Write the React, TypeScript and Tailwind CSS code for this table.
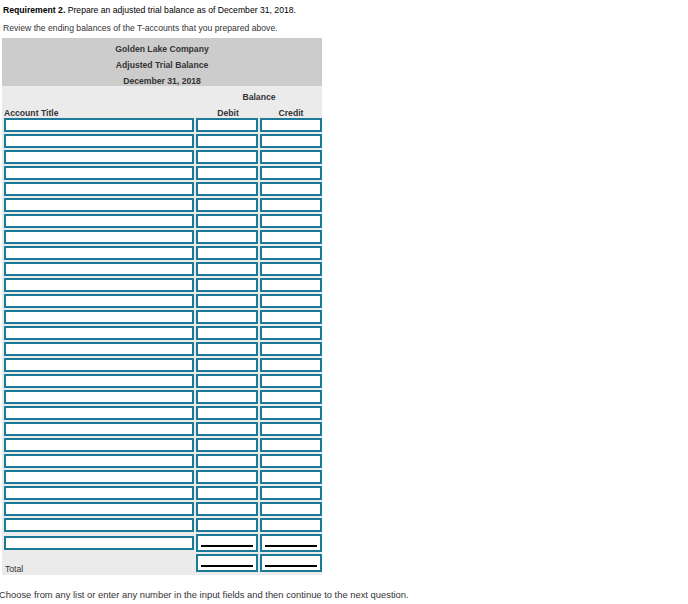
import React from "react";

const ROWS = Array.from({ length: 26 }, (_, i) => i);

function Box({ w, h = 14, line = false }: { w: string; h?: number; line?: boolean }) {
  return (
    <div
      className={`${w} ${h === 14 ? "h-[14px]" : "h-[18px]"} border-2 border-[#1a7a98] bg-white flex items-end justify-center`}
    >
      {line && <div className="w-[52px] h-[2px] bg-black mb-[3px]" />}
    </div>
  );
}

export default function App() {
  return (
    <div className="w-[688px] h-[604px] bg-white font-['Liberation_Sans',Arial,sans-serif] text-[8.65px] relative overflow-hidden">
      <div className="pl-[3px] pt-[4px] h-[18px] leading-[12px] text-black">
        <span className="font-bold">Requirement 2.</span> Prepare an adjusted trial balance as of December 31, 2018.
      </div>
      <div className="pl-[3px] pt-[4px] h-[20px] leading-[12px] text-[#333]">
        Review the ending balances of the T-accounts that you prepared above.
      </div>

      <div className="ml-[2px] w-[320px]">
        <div className="bg-[#cccccc] text-[#333] font-bold text-center">
          <div className="h-[16px] leading-[22px]">Golden Lake Company</div>
          <div className="h-[16px] leading-[22px]">Adjusted Trial Balance</div>
          <div className="h-[16px] leading-[22px]">December 31, 2018</div>
        </div>
        <div className="bg-[#ebebeb] pb-[3px]">
          <div className="flex h-[16px] leading-[22px] font-bold text-[#333]">
            <div className="w-[194px]" />
            <div className="w-[126px] text-center">Balance</div>
          </div>
          <div className="flex h-[16px] leading-[22px] font-bold text-[#333]">
            <div className="w-[194px] pl-[2px]">Account Title</div>
            <div className="w-[64px] text-center">Debit</div>
            <div className="w-[62px] text-center">Credit</div>
          </div>
          <div className="flex flex-col gap-[2px]">
            {ROWS.map((r) => (
              <div key={r} className="flex gap-[2px] pl-[2px]">
                <Box w="w-[190px]" />
                <Box w="w-[62px]" />
                <Box w="w-[62px]" />
              </div>
            ))}
            <div className="flex gap-[2px] pl-[2px] items-center">
              <Box w="w-[190px]" />
              <Box w="w-[62px]" h={18} line />
              <Box w="w-[62px]" h={18} line />
            </div>
            <div className="flex gap-[2px] pl-[2px] items-end">
              <div className="w-[190px] h-[18px] leading-[10px] flex items-end text-[#333] pl-[1px] pb-[0px] translate-y-[2px]">
                Total
              </div>
              <Box w="w-[62px]" h={18} line />
              <Box w="w-[62px]" h={18} line />
            </div>
          </div>
        </div>
      </div>

      <div className="ml-[-1px] mt-[14px] leading-[12px] text-[9.4px] text-[#333]">
        Choose from any list or enter any number in the input fields and then continue to the next question.
      </div>
    </div>
  );
}
